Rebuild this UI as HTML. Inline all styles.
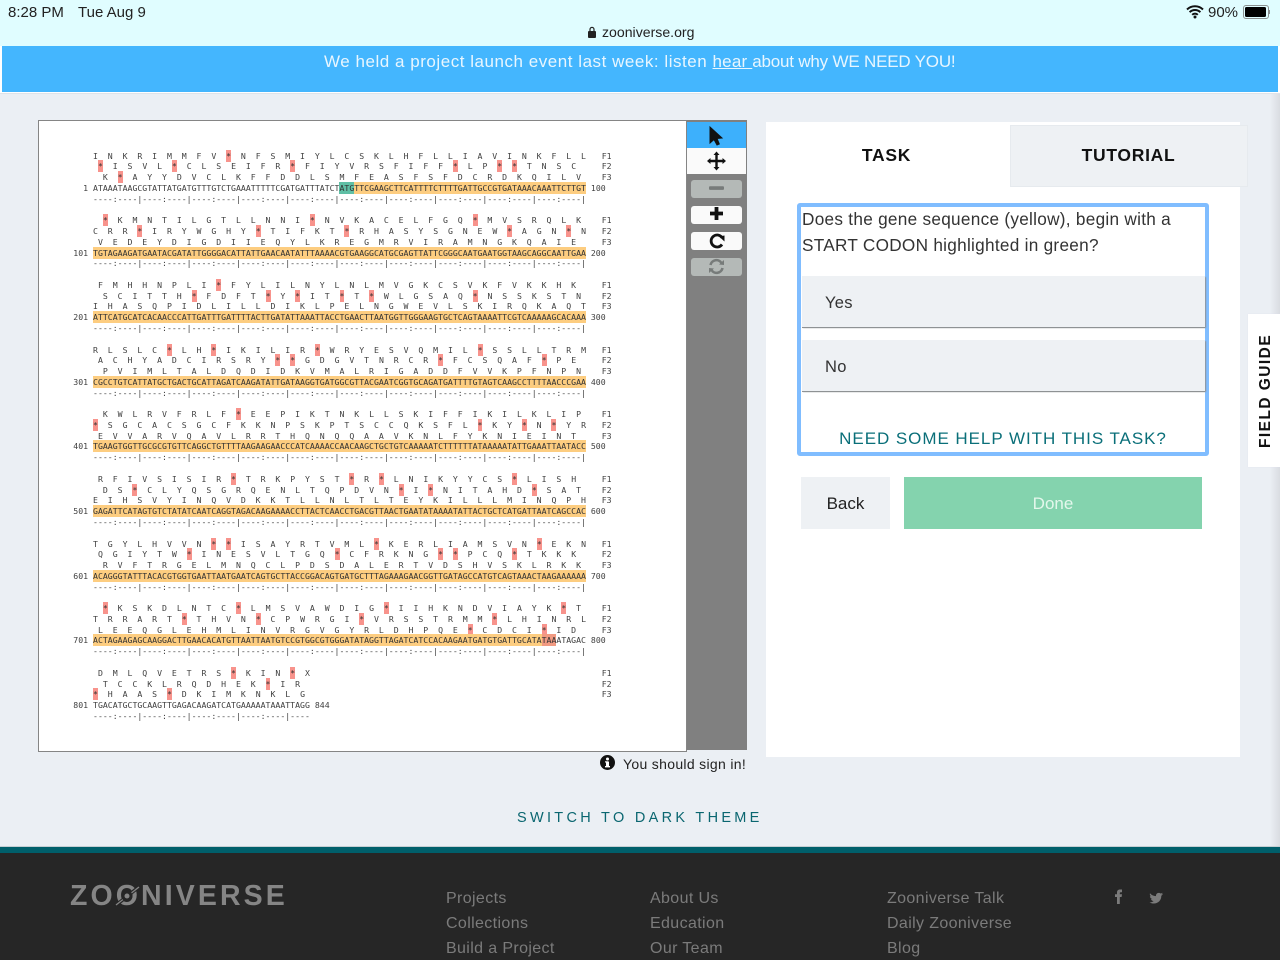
<!DOCTYPE html>
<html><head><meta charset="utf-8"><title>Zooniverse</title>
<style>
html,body{margin:0;padding:0;width:1280px;height:960px;overflow:hidden;background:#ebeff4;font-family:"Liberation Sans",sans-serif;color:#222}
.a{position:absolute}
pre{position:absolute;margin:0;font:8.2px/10.77px "DejaVu Sans Mono",monospace;color:#404040;white-space:pre;filter:blur(.3px)}
pre b{font-weight:400;background:#f8938c;padding:1px 0;color:#333}
pre u{text-decoration:none;background:#fdcd80;padding:1px 0;color:#333}
pre s{text-decoration:none;background:#5fbfa5;padding:1px 0;color:#333}
pre em{font-style:normal;background:#f19a82;padding:1px 0;color:#333}
.f{left:601.7px}
.s{left:73.3px}
.lnk{position:absolute;font-size:16px;letter-spacing:.37px;color:#7b7b7b;white-space:nowrap;line-height:20px}
.opt{position:absolute;left:802px;width:403px;height:51px;background:#eef1f4;box-shadow:1px 1px 1px #8f9294,0 1px 0 #8f9294;font-size:16.5px;line-height:54px;text-indent:23px;color:#333;letter-spacing:.3px}
.tb{position:absolute;left:691px;width:51px;height:18px;border-radius:3px}
</style></head><body>

<div class="a" style="left:0;top:0;width:1280px;height:46px;background:#e0fdff"></div>
<div class="a" style="left:8px;top:4px;font-size:15px;line-height:17px;color:#222;white-space:nowrap">8:28 PM</div>
<div class="a" style="left:78px;top:4px;font-size:15px;line-height:17px;color:#222;white-space:nowrap">Tue Aug 9</div>
<svg class="a" style="left:587px;top:26px" width="10" height="13" viewBox="0 0 10 13"><rect x="1" y="5" width="8" height="7" rx="1" fill="#222"/><path d="M3 5V3.4a2 2 0 0 1 4 0V5" fill="none" stroke="#222" stroke-width="1.2"/></svg>
<div class="a" style="left:602px;top:24px;font-size:14.1px;line-height:16px;color:#222">zooniverse.org</div>
<svg class="a" style="left:1186px;top:4px" width="18" height="15" viewBox="0 0 18 15"><path d="M1 5.500a11.500 11.500 0 0 1 16 0M3.600 8.200a7.800 7.800 0 0 1 10.800 0M6.200 10.800a4 4 0 0 1 5.600 0" fill="none" stroke="#111" stroke-width="2"/><circle cx="9" cy="13" r="1.500" fill="#111"/></svg>
<div class="a" style="left:1208px;top:4px;font-size:15px;line-height:17px;color:#222">90%</div>
<div class="a" style="left:1243px;top:5px;width:24px;height:12px;border:1px solid #8a9090;border-radius:3px"></div>
<div class="a" style="left:1245px;top:7px;width:21px;height:10px;background:#000;border-radius:1.5px"></div>
<div class="a" style="left:1269px;top:10px;width:1px;height:4px;background:#8a9090"></div>

<div class="a" style="left:0;top:46px;width:1280px;height:48px;background:#fff"></div>
<div class="a" style="left:2px;top:46px;width:1276px;height:46px;background:#44b6fe"></div>
<div class="a" style="left:0;top:93px;width:1280px;height:1px;background:#dfe3e8"></div>
<div class="a" style="left:324px;top:51px;font-size:17px;line-height:21px;color:#e8f6ff;white-space:pre"><span style="letter-spacing:.53px">We held a project launch event last week: listen </span><span style="text-decoration:underline;letter-spacing:.2px">hear </span><span style="letter-spacing:-.2px">about why WE NEED YOU!</span></div>

<div class="a" style="left:1270px;top:94px;width:10px;height:753px;background:linear-gradient(90deg,#ebeff4,#d9dce1)"></div>

<!-- viewer -->
<div class="a" style="left:38px;top:120px;width:647px;height:630px;background:#fff;border:1px solid #858585;box-sizing:content-box"></div>

<pre class="s" style="top:150.6px">    I  N  K  R  I  M  M  F  V  <b>*</b>  N  F  S  M  I  Y  L  C  S  K  L  H  F  L  L  I  A  V  I  N  K  F  L  L
     <b>*</b>  I  S  V  L  <b>*</b>  C  L  S  E  I  F  R  <b>*</b>  F  I  Y  V  R  S  F  I  F  F  <b>*</b>  L  P  <b>*</b>  <b>*</b>  T  N  S  C
      K  <b>*</b>  A  Y  Y  D  V  C  L  K  F  F  D  D  L  S  M  F  E  A  S  F  S  F  D  C  R  D  K  Q  I  L  V
  1 ATAAATAAGCGTATTATGATGTTTGTCTGAAATTTTTCGATGATTTATCT<s>ATG</s><u>TTCGAAGCTTCATTTTCTTTTGATTGCCGTGATAAACAAATTCTTGT</u> 100
    ----:----|----:----|----:----|----:----|----:----|----:----|----:----|----:----|----:----|----:----|</pre>
<pre class="f" style="top:150.6px">F1
F2
F3</pre>

<pre class="s" style="top:215.25px">      <b>*</b>  K  M  N  T  I  L  G  T  L  L  N  N  I  <b>*</b>  N  V  K  A  C  E  L  F  G  Q  <b>*</b>  M  V  S  R  Q  L  K
    C  R  R  <b>*</b>  I  R  Y  W  G  H  Y  <b>*</b>  T  I  F  K  T  <b>*</b>  R  H  A  S  Y  S  G  N  E  W  <b>*</b>  A  G  N  <b>*</b>  N
     V  E  D  E  Y  D  I  G  D  I  I  E  Q  Y  L  K  R  E  G  M  R  V  I  R  A  M  N  G  K  Q  A  I  E
101 <u>TGTAGAAGATGAATACGATATTGGGGACATTATTGAACAATATTTAAAACGTGAAGGCATGCGAGTTATTCGGGCAATGAATGGTAAGCAGGCAATTGAA</u> 200
    ----:----|----:----|----:----|----:----|----:----|----:----|----:----|----:----|----:----|----:----|</pre>
<pre class="f" style="top:215.25px">F1
F2
F3</pre>

<pre class="s" style="top:279.9px">     F  M  H  H  N  P  L  I  <b>*</b>  F  Y  L  I  L  N  Y  L  N  L  M  V  G  K  C  S  V  K  F  V  K  K  H  K
      S  C  I  T  T  H  <b>*</b>  F  D  F  T  <b>*</b>  Y  <b>*</b>  I  T  <b>*</b>  T  <b>*</b>  W  L  G  S  A  Q  <b>*</b>  N  S  S  K  S  T  N
    I  H  A  S  Q  P  I  D  L  I  L  L  D  I  K  L  P  E  L  N  G  W  E  V  L  S  K  I  R  Q  K  A  Q  T
201 <u>ATTCATGCATCACAACCCATTGATTTGATTTTACTTGATATTAAATTACCTGAACTTAATGGTTGGGAAGTGCTCAGTAAAATTCGTCAAAAAGCACAAA</u> 300
    ----:----|----:----|----:----|----:----|----:----|----:----|----:----|----:----|----:----|----:----|</pre>
<pre class="f" style="top:279.9px">F1
F2
F3</pre>

<pre class="s" style="top:344.55px">    R  L  S  L  C  <b>*</b>  L  H  <b>*</b>  I  K  I  L  I  R  <b>*</b>  W  R  Y  E  S  V  Q  M  I  L  <b>*</b>  S  S  L  L  T  R  M
     A  C  H  Y  A  D  C  I  R  S  R  Y  <b>*</b>  <b>*</b>  G  D  G  V  T  N  R  C  R  <b>*</b>  F  C  S  Q  A  F  <b>*</b>  P  E
      P  V  I  M  L  T  A  L  D  Q  D  I  D  K  V  M  A  L  R  I  G  A  D  D  F  V  V  K  P  F  N  P  N
301 <u>CGCCTGTCATTATGCTGACTGCATTAGATCAAGATATTGATAAGGTGATGGCGTTACGAATCGGTGCAGATGATTTTGTAGTCAAGCCTTTTAACCCGAA</u> 400
    ----:----|----:----|----:----|----:----|----:----|----:----|----:----|----:----|----:----|----:----|</pre>
<pre class="f" style="top:344.55px">F1
F2
F3</pre>

<pre class="s" style="top:409.2px">      K  W  L  R  V  F  R  L  F  <b>*</b>  E  E  P  I  K  T  N  K  L  L  S  K  I  F  F  I  K  I  L  K  L  I  P
    <b>*</b>  S  G  C  A  C  S  G  C  F  K  K  N  P  S  K  P  T  S  C  C  Q  K  S  F  L  <b>*</b>  K  Y  <b>*</b>  N  <b>*</b>  Y  R
     E  V  V  A  R  V  Q  A  V  L  R  R  T  H  Q  N  Q  Q  A  A  V  K  N  L  F  Y  K  N  I  E  I  N  T
401 <u>TGAAGTGGTTGCGCGTGTTCAGGCTGTTTTAAGAAGAACCCATCAAAACCAACAAGCTGCTGTCAAAAATCTTTTTTATAAAAATATTGAAATTAATACC</u> 500
    ----:----|----:----|----:----|----:----|----:----|----:----|----:----|----:----|----:----|----:----|</pre>
<pre class="f" style="top:409.2px">F1
F2
F3</pre>

<pre class="s" style="top:473.85px">     R  F  I  V  S  I  S  I  R  <b>*</b>  T  R  K  P  Y  S  T  <b>*</b>  R  <b>*</b>  L  N  I  K  Y  Y  C  S  <b>*</b>  L  I  S  H
      D  S  <b>*</b>  C  L  Y  Q  S  G  R  Q  E  N  L  T  Q  P  D  V  N  <b>*</b>  I  <b>*</b>  N  I  T  A  H  D  <b>*</b>  S  A  T
    E  I  H  S  V  Y  I  N  Q  V  D  K  K  T  L  L  N  L  T  L  T  E  Y  K  I  L  L  L  M  I  N  Q  P  H
501 <u>GAGATTCATAGTGTCTATATCAATCAGGTAGACAAGAAAACCTTACTCAACCTGACGTTAACTGAATATAAAATATTACTGCTCATGATTAATCAGCCAC</u> 600
    ----:----|----:----|----:----|----:----|----:----|----:----|----:----|----:----|----:----|----:----|</pre>
<pre class="f" style="top:473.85px">F1
F2
F3</pre>

<pre class="s" style="top:538.5px">    T  G  Y  L  H  V  V  N  <b>*</b>  <b>*</b>  I  S  A  Y  R  T  V  M  L  <b>*</b>  K  E  R  L  I  A  M  S  V  N  <b>*</b>  E  K  N
     Q  G  I  Y  T  W  <b>*</b>  I  N  E  S  V  L  T  G  Q  <b>*</b>  C  F  R  K  N  G  <b>*</b>  <b>*</b>  P  C  Q  <b>*</b>  T  K  K  K
      R  V  F  T  R  G  E  L  M  N  Q  C  L  P  D  S  D  A  L  E  R  T  V  D  S  H  V  S  K  L  R  K  K
601 <u>ACAGGGTATTTACACGTGGTGAATTAATGAATCAGTGCTTACCGGACAGTGATGCTTTAGAAAGAACGGTTGATAGCCATGTCAGTAAACTAAGAAAAAA</u> 700
    ----:----|----:----|----:----|----:----|----:----|----:----|----:----|----:----|----:----|----:----|</pre>
<pre class="f" style="top:538.5px">F1
F2
F3</pre>

<pre class="s" style="top:603.15px">      <b>*</b>  K  S  K  D  L  N  T  C  <b>*</b>  L  M  S  V  A  W  D  I  G  <b>*</b>  I  I  H  K  N  D  V  I  A  Y  K  <b>*</b>  T
    T  R  R  A  R  T  <b>*</b>  T  H  V  N  <b>*</b>  C  P  W  R  G  I  <b>*</b>  V  R  S  S  T  R  M  M  <b>*</b>  L  H  I  N  R  L
     L  E  E  Q  G  L  E  H  M  L  I  N  V  R  G  V  G  Y  R  L  D  H  P  Q  E  <b>*</b>  C  D  C  I  <b>*</b>  I  D
701 <u>ACTAGAAGAGCAAGGACTTGAACACATGTTAATTAATGTCCGTGGCGTGGGATATAGGTTAGATCATCCACAAGAATGATGTGATTGCATA</u><em>TAA</em>ATAGAC 800
    ----:----|----:----|----:----|----:----|----:----|----:----|----:----|----:----|----:----|----:----|</pre>
<pre class="f" style="top:603.15px">F1
F2
F3</pre>

<pre class="s" style="top:667.8px">     D  M  L  Q  V  E  T  R  S  <b>*</b>  K  I  N  <b>*</b>  X
      T  C  C  K  L  R  Q  D  H  E  K  <b>*</b>  I  R
    <b>*</b>  H  A  A  S  <b>*</b>  D  K  I  M  K  N  K  L  G
801 TGACATGCTGCAAGTTGAGACAAGATCATGAAAAATAAATTAGG 844
    ----:----|----:----|----:----|----:----|----</pre>
<pre class="f" style="top:667.8px">F1
F2
F3</pre>

<!-- toolbar -->
<div class="a" style="left:687px;top:120px;width:60px;height:630px;background:#808080"></div>
<div class="a" style="left:687px;top:122px;width:59px;height:26px;background:#3db0fc"></div>
<div class="a" style="left:687px;top:148px;width:59px;height:26px;background:#fafafa"></div>
<svg class="a" style="left:687px;top:122px" width="60" height="52" viewBox="0 0 60 52">
<path d="M23 5V21L27 17.500L30 23L32.300 22L30 16.500L35 16Z" fill="#111" stroke="#111" stroke-width="1"/>
<path d="M29.500 31V47M21.500 39H37.500" stroke="#111" stroke-width="2.400" fill="none"/>
<path d="M29.500 29.500L32.500 33H26.500ZM29.500 48.500L32.500 45H26.500ZM20 39L23.500 36V42ZM39 39L35.500 36V42Z" fill="#111"/>
</svg>
<div class="tb" style="top:180px;background:#b4b9b7"></div>
<div class="tb" style="top:206px;background:#fafafa"></div>
<div class="tb" style="top:232px;background:#fafafa"></div>
<div class="tb" style="top:258px;background:#b4b9b7"></div>
<svg class="a" style="left:687px;top:176px" width="60" height="104" viewBox="0 0 60 104">
<rect x="22" y="10.300" width="15" height="3.600" rx="1" fill="#777b7a"/>
<path d="M29.500 31V44M23 37.500H36" stroke="#111" stroke-width="3.800" fill="none"/>
<path d="M35 61.500A6 6 0 1 0 35 68.500" fill="none" stroke="#111" stroke-width="2.800"/>
<path d="M32 60.500L37.500 59.500V65.500Z" fill="#111"/>
<path d="M23.500 89A6 6 0 0 1 34.500 87M35.500 92A6 6 0 0 1 24.500 94" fill="none" stroke="#777b7a" stroke-width="2.600"/>
<path d="M32 88.500L37 89V84ZM27 92.500L22 92V97Z" fill="#777b7a"/>
</svg>

<svg class="a" style="left:600px;top:755px" width="16" height="16" viewBox="0 0 16 16"><circle cx="7.500" cy="7.500" r="7.500" fill="#111"/><rect x="6" y="6.500" width="3" height="5.500" fill="#fff"/><rect x="5" y="11" width="5" height="1.400" fill="#fff"/><rect x="5" y="6.300" width="3" height="1.200" fill="#fff"/><circle cx="7.500" cy="4" r="1.500" fill="#fff"/></svg>
<div class="a" style="left:623px;top:756px;font-size:14px;line-height:17px;letter-spacing:.32px;color:#222;white-space:nowrap">You should sign in!</div>
<div class="a" style="left:517px;top:809px;font-size:14.5px;line-height:18px;letter-spacing:3.3px;color:#0a6670;white-space:nowrap">SWITCH TO DARK THEME</div>

<!-- right panel -->
<div class="a" style="left:766px;top:122px;width:474px;height:635px;background:#fff"></div>
<div class="a" style="left:1010px;top:125px;width:236px;height:60px;background:#eef1f4;border:1px solid #e6eaee"></div>
<div class="a" style="left:766px;top:145px;width:241px;text-align:center;font-weight:700;font-size:17.5px;line-height:20px;letter-spacing:.7px;color:#111">TASK</div>
<div class="a" style="left:1010px;top:145px;width:237px;text-align:center;font-weight:700;font-size:17.5px;line-height:20px;letter-spacing:.7px;color:#111">TUTORIAL</div>
<div class="a" style="left:797px;top:203px;width:404px;height:245px;border:4px solid #80bdff;border-radius:3px"></div>
<div class="a" style="left:802px;top:206px;font-size:17.2px;line-height:26px;letter-spacing:.28px;color:#333;white-space:nowrap">Does the gene sequence (yellow), begin with a<br>START CODON highlighted in green?</div>
<div class="opt" style="top:276px">Yes</div>
<div class="opt" style="top:340px">No</div>
<div class="a" style="left:797px;top:429px;width:412px;text-align:center;font-size:17px;line-height:20px;letter-spacing:.95px;color:#0a6f79;white-space:nowrap">NEED SOME HELP WITH THIS TASK?</div>
<div class="a" style="left:801px;top:477px;width:89px;height:52px;background:#eef1f4;text-align:center;font-size:17px;line-height:53px;color:#222">Back</div>
<div class="a" style="left:904px;top:477px;width:298px;height:52px;background:#84d3ae;text-align:center;font-size:17px;line-height:53px;color:#e4f7ec">Done</div>
<div class="a" style="left:1248px;top:314px;width:32px;height:153px;background:#fff;box-shadow:0 0 1px #dde"></div>
<div class="a" style="left:1257px;top:314px;height:153px;width:18px;writing-mode:vertical-rl;transform:rotate(180deg);text-align:center;font-weight:700;font-size:15.5px;line-height:18px;letter-spacing:1.45px;color:#111;white-space:nowrap">FIELD GUIDE</div>

<!-- footer -->
<div class="a" style="left:0;top:846px;width:1280px;height:1px;background:#c5ced3"></div>
<div class="a" style="left:0;top:847px;width:1280px;height:113px;background:#262626"></div>
<div class="a" style="left:0;top:847px;width:1280px;height:6px;background:#005f6b"></div>
<div class="a" style="left:70px;top:881px;font-weight:700;font-size:28.5px;line-height:30px;letter-spacing:3.1px;color:#858585;white-space:nowrap">ZOONIVERSE</div>
<svg class="a" style="left:110px;top:880px" width="34" height="32" viewBox="0 0 34 32"><path d="M5 26L30 6" stroke="#262626" stroke-width="3.500"/><path d="M6 25L29 7" stroke="#858585" stroke-width="1.300"/><circle cx="17" cy="16" r="5.500" fill="#262626"/><circle cx="17" cy="16" r="2.500" fill="#858585"/></svg>
<div class="lnk" style="left:446px;top:889px">Projects</div>
<div class="lnk" style="left:446px;top:914px">Collections</div>
<div class="lnk" style="left:446px;top:939px">Build a Project</div>
<div class="lnk" style="left:650px;top:889px">About Us</div>
<div class="lnk" style="left:650px;top:914px">Education</div>
<div class="lnk" style="left:650px;top:939px">Our Team</div>
<div class="lnk" style="left:887px;top:889px">Zooniverse Talk</div>
<div class="lnk" style="left:887px;top:914px">Daily Zooniverse</div>
<div class="lnk" style="left:887px;top:939px">Blog</div>
<svg class="a" style="left:1112px;top:888px" width="60" height="18" viewBox="0 0 60 18"><path d="M5 16V9H3V6.300H5V4.500C5 2.500 6.200 1.500 8 1.500H10V4.200H8.700C8 4.200 7.800 4.600 7.800 5.200V6.300H10L9.600 9H7.800V16Z" fill="#7b7b7b"/><path d="M38 5.200C39.500 7 41.500 8 44 8.100C43.600 5.600 46.500 3.800 48.500 5.500C49.300 5.400 50 5 50.700 4.700C50.400 5.500 49.900 6.100 49.200 6.500C49.900 6.400 50.500 6.200 51 6C50.600 6.700 50 7.200 49.300 7.700C49.500 11.800 46.300 15.500 41.800 15.500C40.200 15.500 38.800 15 37.500 14.200C39 14.400 40.500 14 41.600 13.100C40.300 13 39.300 12.200 38.900 11.100C39.400 11.200 39.800 11.200 40.300 11C38.900 10.700 37.900 9.500 37.900 8C38.300 8.200 38.800 8.400 39.300 8.400C38 7.500 37.500 6.500 38 5.200Z" fill="#7b7b7b"/></svg>
</body></html>
